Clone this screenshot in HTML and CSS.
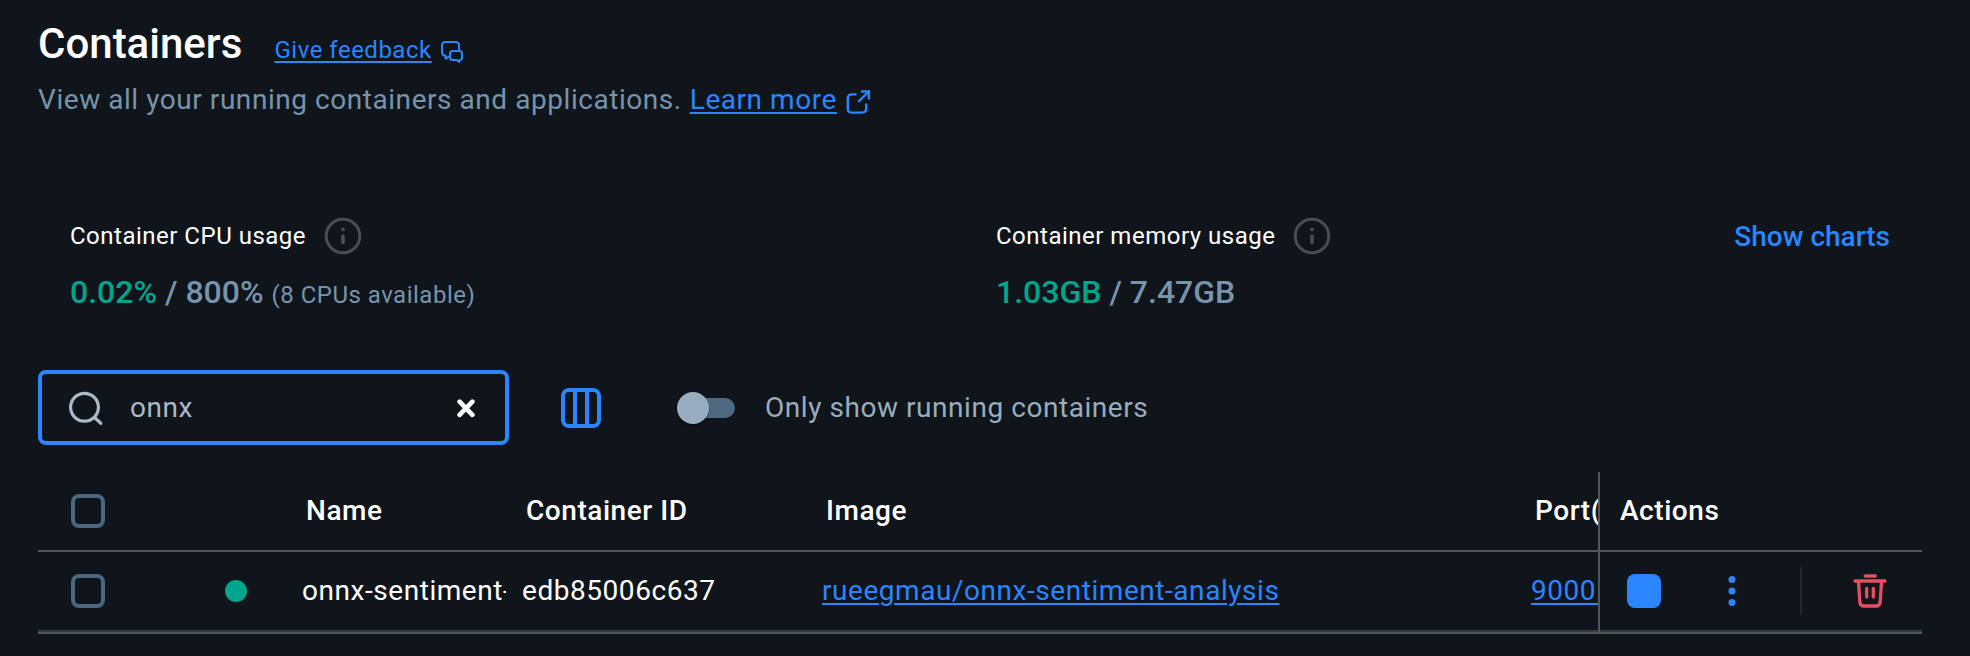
FILE: index.html
```html
<!DOCTYPE html>
<html lang="en">
<head>
<meta charset="utf-8">
<title>Containers</title>
<link rel="stylesheet" href="styles.css">
</head>
<body>
<main class="page">
  <header class="header">
    <div class="title-row">
      <h1 class="title">Containers</h1>
      <a class="link feedback" href="#">Give feedback</a>
      <svg class="feedback-icon" width="24" height="24" viewBox="0 0 24 24" fill="none" stroke="currentColor" stroke-width="2" stroke-linejoin="round"><path d="M9 16.200 5.800 18.800 5.500 15.800Q2 15.500 2 12.500V5.500Q2 2 5.500 2H15.500Q19 2 19 5.500V11"/><path d="M13 11H19.500Q22 11 22 13.500V17.500Q22 19.800 20 20L19 22 17 20H12.500Q10 20 10 17.500V13.500Q10 11 13 11Z"/></svg>
    </div>
    <p class="subtitle"><span>View all your running containers and applications.</span>
      <a class="link learn" href="#">Learn more</a>
      <svg class="external-icon" width="26" height="26" viewBox="0 0 26 26" fill="none" stroke="currentColor" stroke-width="2.400"><path d="M10.500 4.400H5.800Q1.800 4.400 1.800 8.400V18.600Q1.800 22.600 5.800 22.600H16.200Q20.200 22.600 20.200 18.600V13.500"/><path d="M12.300 11.900 22.700 1.500M15 1.500H22.900V9.500"/></svg>
    </p>
  </header>

  <section class="stats">
    <div class="stat">
      <div class="stat-label"><span>Container CPU usage</span>
        <svg class="info" width="38" height="38" viewBox="0 0 38 38"><circle cx="19" cy="19" r="16.800" fill="none" stroke="currentColor" stroke-width="3"/><circle cx="19" cy="12.300" r="1.900" fill="currentColor"/><path d="M19 19V25.500" stroke="currentColor" stroke-width="3.600" stroke-linecap="round"/></svg>
      </div>
      <div class="stat-value"><b class="used">0.02%</b><b class="total"> / 800%</b> <span class="note">(8 CPUs available)</span></div>
    </div>
    <div class="stat">
      <div class="stat-label"><span>Container memory usage</span>
        <svg class="info" width="38" height="38" viewBox="0 0 38 38"><circle cx="19" cy="19" r="16.800" fill="none" stroke="currentColor" stroke-width="3"/><circle cx="19" cy="12.300" r="1.900" fill="currentColor"/><path d="M19 19V25.500" stroke="currentColor" stroke-width="3.600" stroke-linecap="round"/></svg>
      </div>
      <div class="stat-value"><b class="used">1.03GB</b><b class="total"> / 7.47GB</b></div>
    </div>
    <button class="show-charts">Show charts</button>
  </section>

  <section class="toolbar">
    <div class="search">
      <svg width="36" height="36" viewBox="0 0 36 36" fill="none" stroke="#a9bac8" stroke-width="3.200" stroke-linecap="round"><circle cx="16.500" cy="17.300" r="13.900"/><path d="M26.500 27.500 32.800 33.300"/></svg>
      <span class="query">onnx</span>
      <svg class="clear" width="20" height="20" viewBox="0 0 20 20" stroke="#fff" stroke-width="4.600" stroke-linecap="round"><path d="M3.600 3.600 16.400 16.900M16.400 3.600 3.600 16.900"/></svg>
    </div>
    <svg class="columns" width="40" height="40" viewBox="0 0 40 40" fill="none" stroke="currentColor" stroke-width="4"><rect x="2" y="2" width="36" height="36" rx="6"/><path d="M14 2V38M26 2V38"/></svg>
    <span class="toggle"><span class="knob"></span></span>
    <span class="toggle-label">Only show running containers</span>
  </section>

  <section class="table">
    <div class="row head">
      <span class="cell select"><span class="checkbox"></span></span>
      <span class="cell"></span>
      <span class="cell text">Name</span>
      <span class="cell text">Container ID</span>
      <span class="cell text">Image</span>
      <span class="cell text">Port(s)</span>
      <span class="cell text actions">Actions</span>
    </div>
    <div class="row body">
      <span class="cell select"><span class="checkbox"></span></span>
      <span class="cell"><span class="status"></span></span>
      <span class="cell text"><span class="name">onnx-sentiment-analysis</span></span>
      <span class="cell text">edb85006c637</span>
      <span class="cell text"><a class="link" href="#">rueegmau/onnx-sentiment-analysis</a></span>
      <span class="cell text"><a class="link" href="#">9000:9000</a></span>
      <span class="cell actions">
        <span class="stop"></span>
        <svg class="more" width="8" height="32" viewBox="0 0 8 32" fill="currentColor"><circle cx="4" cy="4.500" r="3.500"/><circle cx="4" cy="16" r="3.500"/><circle cx="4" cy="27.500" r="3.500"/></svg>
        <span class="divider"></span>
        <svg class="trash" width="34" height="34" viewBox="0 0 34 34" fill="none" stroke="currentColor" stroke-width="3.300" stroke-linecap="round" stroke-linejoin="round"><path d="M12.300 2H22.300M2 7H32M5.500 7.500 6.800 28Q7.200 32 11 32H23Q26.800 32 27.200 28L28.500 7.500"/><path d="M13.700 14.500V23M20.300 14.500V23"/></svg>
      </span>
    </div>
  </section>
</main>
</body>
</html>
```

FILE: styles.css
```css
* { box-sizing: border-box; }

body {
  margin: 0;
  background: #10151b;
  color: #fff;
  font-family: Roboto, "Liberation Sans", sans-serif;
  font-size: 28px;
  letter-spacing: 0.55px;
}

.page {
  height: 656px;
  padding: 0 48px 0 38px;
  overflow: hidden;
}

.link,
.feedback-icon,
.external-icon,
.columns,
.more { color: #2a85ff; }

.link {
  text-decoration: underline;
  text-decoration-thickness: 2px;
  text-underline-offset: 3px;
}

.title-row {
  display: flex;
  align-items: baseline;
  height: 74px;
  padding-top: 19px;
  line-height: 50px;
}

.title {
  width: 236.500px;
  margin: 0;
  font-size: 42px;
  font-weight: 500;
  letter-spacing: 0;
}

.feedback {
  width: 157.500px;
  font-size: 24px;
  letter-spacing: 0.5px;
  white-space: nowrap;
}

.feedback-icon {
  align-self: flex-start;
  margin: 21px 0 0 8px;
}

.subtitle {
  display: flex;
  height: 50px;
  margin: 0;
  color: #7794ac;
  line-height: 52px;
  white-space: nowrap;
}

.learn { margin-left: 8px; }

.external-icon { margin: 15.500px 0 0 9px; }

.stats {
  display: grid;
  grid-template-columns: 926px 1fr auto;
  height: 246px;
  padding: 93px 32px 0 32px;
}

.stat-label {
  display: flex;
  align-items: center;
  gap: 17.500px;
  height: 38px;
  font-size: 24px;
  letter-spacing: 0.5px;
}

.info { color: #4b4d51; }

.stat-value {
  height: 50px;
  margin-top: 12px;
  color: #7794ac;
  font-size: 32px;
  letter-spacing: 0;
  line-height: 50px;
  white-space: pre;
}

.stat-value b { font-weight: 500; }
.stat-value .used { color: #00a58c; }
.note { font-size: 24px; letter-spacing: 0.5px; }

.show-charts {
  height: 38px;
  margin-top: 1px;
  padding: 0;
  border: 0;
  background: none;
  color: #2a85ff;
  font: 500 28px/38px Roboto, "Liberation Sans", sans-serif;
}

.toolbar {
  display: flex;
  align-items: center;
  height: 75px;
  color: #98adbd;
}

.search {
  display: flex;
  align-items: center;
  width: 471px;
  height: 75px;
  padding: 0 29.500px 0 26px;
  border: 4px solid #2a85ff;
  border-radius: 8px;
}

.query { margin-left: 26px; color: #a9bac8; }
.clear { margin-left: auto; }
.columns { margin-left: 52px; }

.toggle {
  width: 54px;
  height: 20px;
  margin-left: 80px;
  border-radius: 10px;
  background: #4f6a80;
}

.knob {
  display: block;
  width: 32px;
  height: 32px;
  margin: -6px 0 0 -4px;
  border-radius: 50%;
  background: #98adbd;
  box-shadow: 0 2px 3px rgba(0, 0, 0, 0.35);
}

.toggle-label { margin-left: 30px; }

.table { padding-top: 27px; }

.row {
  display: grid;
  grid-template-columns: 187px 77px 220px 300px 709px 67px 1fr;
  height: 80px;
  border-bottom: 2px solid #555;
}

.head { font-weight: 500; }

.cell {
  display: flex;
  align-items: center;
  min-width: 0;
  overflow: hidden;
  white-space: nowrap;
}

.cell.select { padding-left: 33px; }
.cell.text { padding-bottom: 2px; }
.head .text { padding-left: 4px; }

.row.body {
  height: 82px;
  box-shadow: inset 0 -2px #2c3e4b;
}

.body .cell { height: 78px; }

.cell.actions { border-left: 2px solid #555; }
.head .actions { padding-left: 20px; }
.body .actions { height: 80px; padding: 0 35px 2px 27px; }

.checkbox {
  width: 34px;
  height: 34px;
  border: 4px solid #4b667f;
  border-radius: 8px;
}

.status {
  width: 22px;
  height: 22px;
  border-radius: 50%;
  background: #00a58c;
}

.name { width: 204px; overflow: hidden; }

.stop {
  width: 34px;
  height: 34px;
  border-radius: 8px;
  background: #2a85ff;
}

.more { margin-left: 67px; }

.divider {
  width: 2px;
  height: 48px;
  margin-left: 64px;
  background: #24272d;
}

.trash { margin-left: 51px; color: #e54f61; }
```
